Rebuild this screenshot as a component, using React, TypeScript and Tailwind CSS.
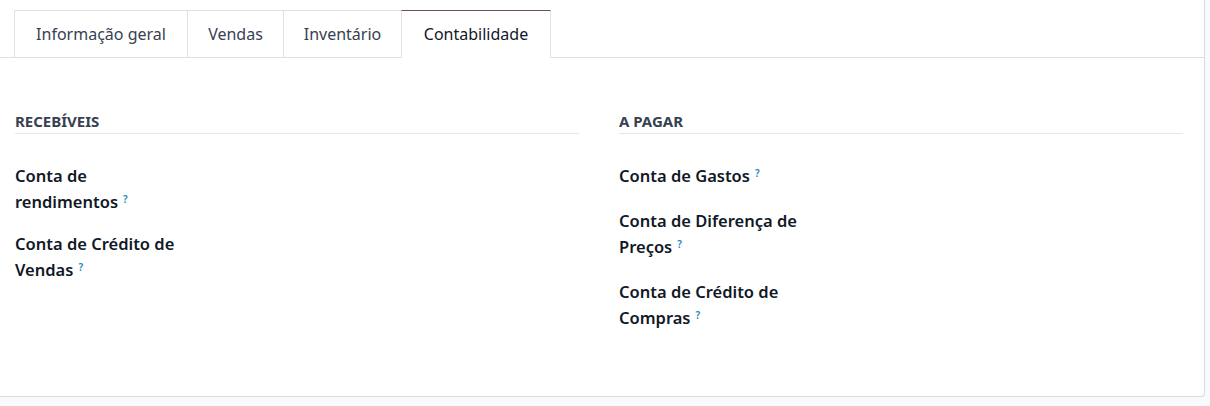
import React from "react";

const tabs = [
  { label: "Informação geral", w: "w-[174px]" },
  { label: "Vendas", w: "w-[97px]" },
  { label: "Inventário", w: "w-[119px]" },
];

function Label({ first, last }: { first?: string; last: string }) {
  return (
    <div className="flex min-h-[26px]">
      <div className="w-[200px] text-[16.5px] leading-[26px] font-semibold text-[#111827]">
        {first && (
          <>
            {first}
            <br />
          </>
        )}
        {last}
        <sup className="ml-[5px] text-[10px] font-semibold text-[#1a88b8]">?</sup>
      </div>
    </div>
  );
}

export default function App() {
  return (
    <div
      className="w-[1210px] h-[406px] bg-[#f9fafb]"
      style={{ fontFamily: '"Noto Sans", "Open Sans", sans-serif' }}
    >
      <div className="w-[1205px] h-[397px] bg-white border-r border-b border-[#d8dadd] rounded-br-[4px]">
        <div className="pt-[10px] pl-[14px] border-b border-[#dee2e6] flex">
          {tabs.map((t, i) => (
            <div
              key={t.label}
              className={`${t.w} ${i > 0 ? "-ml-px" : ""} h-[47px] border border-b-0 border-[#dee2e6] flex items-center justify-center text-[16px] text-[#374151]`}
            >
              {t.label}
            </div>
          ))}
          <div className="w-[150px] -ml-px h-[48px] -mb-px bg-white border border-b-0 border-[#dee2e6] border-t-[#714b67] flex items-center justify-center text-[16px] text-[#111827]">
            <span className="-mt-px">Contabilidade</span>
          </div>
        </div>
        <div className="flex gap-[40px] pl-[15px] pr-[21px] pt-[53px]">
          <div className="flex-1">
            <div className="border-b border-[#e5e7eb] pb-[2px] text-[15px] font-bold text-[#374151] leading-[20px]">
              RECEBÍVEIS
            </div>
            <div className="flex flex-col gap-[16px] pt-[29px]">
              <Label first="Conta de" last="rendimentos" />
              <Label first="Conta de Crédito de" last="Vendas" />
            </div>
          </div>
          <div className="flex-1">
            <div className="border-b border-[#e5e7eb] pb-[2px] text-[15px] font-bold text-[#374151] leading-[20px]">
              A PAGAR
            </div>
            <div className="flex flex-col gap-[19px] pt-[29px]">
              <Label last="Conta de Gastos" />
              <Label first="Conta de Diferença de" last="Preços" />
              <Label first="Conta de Crédito de" last="Compras" />
            </div>
          </div>
        </div>
      </div>
    </div>
  );
}
